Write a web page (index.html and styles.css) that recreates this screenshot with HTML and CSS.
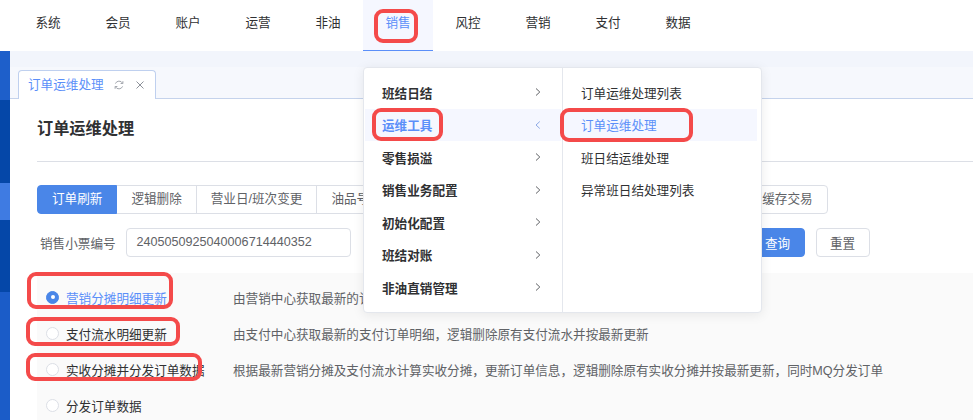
FILE: index.html
```html
<!DOCTYPE html>
<html lang="zh-CN">
<head>
<meta charset="utf-8">
<title>订单运维处理</title>
<link rel="stylesheet" href="styles.css">
</head>
<body>
<header class="topnav">
  <a class="nav-item">系统</a>
  <a class="nav-item">会员</a>
  <a class="nav-item">账户</a>
  <a class="nav-item">运营</a>
  <a class="nav-item">非油</a>
  <a class="nav-item active">销售</a>
  <a class="nav-item">风控</a>
  <a class="nav-item">营销</a>
  <a class="nav-item">支付</a>
  <a class="nav-item">数据</a>
</header>
<div class="layout">
  <aside class="sidebar">
    <div class="sb sb1"></div>
    <div class="sb sb2"></div>
    <div class="sb sb3"></div>
    <div class="sb sb4"></div>
    <div class="sb sb5"></div>
  </aside>
  <main class="content">
    <div class="tabbar">
      <div class="tabstrip">
        <div class="tab">
          <span class="tab-text">订单运维处理</span>
          <svg class="tab-refresh" width="10" height="10" viewBox="0 0 10 10"><path d="M8.6 3.2A4 4 0 0 0 1.4 3.6" fill="none" stroke="#a3a7ae" stroke-width="1"/><path d="M8.9 1.2V3.5H6.6" fill="none" stroke="#a3a7ae" stroke-width="1"/><path d="M1.4 6.8A4 4 0 0 0 8.6 6.4" fill="none" stroke="#a3a7ae" stroke-width="1"/><path d="M1.1 8.8V6.5H3.4" fill="none" stroke="#a3a7ae" stroke-width="1"/></svg>
          <svg class="tab-close" width="8" height="8" viewBox="0 0 8 8"><path d="M0.5 0.5L7.5 7.5M7.5 0.5L0.5 7.5" stroke="#8d9199" stroke-width="1"/></svg>
        </div>
      </div>
    </div>
    <section class="panel">
      <h1 class="title">订单运维处理</h1>
      <div class="divider"></div>
      <div class="btn-group">
        <button class="seg active">订单刷新</button>
        <button class="seg">逻辑删除</button>
        <button class="seg">营业日/班次变更</button>
        <button class="seg">油品号变更</button>
        <button class="seg">会员信息变更</button>
        <button class="seg">发票信息重新推送</button>
        <button class="seg">重推营销数据</button>
        <button class="seg">缓存交易</button>
      </div>
      <div class="form-row">
        <label class="form-label">销售小票编号</label>
        <div class="input">2405050925040006714440352</div>
        <div class="actions">
          <button class="btn primary">查询</button>
          <button class="btn">重置</button>
        </div>
      </div>
      <div class="options">
        <div class="opt-row">
          <div class="opt-label checked"><span class="radio on"></span><span>营销分摊明细更新</span></div>
          <div class="opt-desc">由营销中心获取最新的订单营销分摊明细，逻辑删除原有营销分摊并按最新更新</div>
        </div>
        <div class="opt-row">
          <div class="opt-label"><span class="radio"></span><span>支付流水明细更新</span></div>
          <div class="opt-desc">由支付中心获取最新的支付订单明细，逻辑删除原有支付流水并按最新更新</div>
        </div>
        <div class="opt-row">
          <div class="opt-label"><span class="radio"></span><span>实收分摊并分发订单数据</span></div>
          <div class="opt-desc">根据最新营销分摊及支付流水计算实收分摊，更新订单信息，逻辑删除原有实收分摊并按最新更新，同时MQ分发订单</div>
        </div>
        <div class="opt-row">
          <div class="opt-label"><span class="radio"></span><span>分发订单数据</span></div>
        </div>
      </div>
    </section>
  </main>
</div>

<div class="dropdown">
  <ul class="menu-col main-col">
    <li class="menu-item">班结日结<svg class="chev" width="6" height="10" viewBox="0 0 6 10"><path d="M1 1.5L4.8 5L1 8.5" fill="none" stroke="#606266" stroke-width="1"/></svg></li>
    <li class="menu-item active">运维工具<svg class="chev" width="6" height="10" viewBox="0 0 6 10"><path d="M4.8 1.5L1 5L4.8 8.5" fill="none" stroke="#8eaae6" stroke-width="1"/></svg></li>
    <li class="menu-item">零售损溢<svg class="chev" width="6" height="10" viewBox="0 0 6 10"><path d="M1 1.5L4.8 5L1 8.5" fill="none" stroke="#606266" stroke-width="1"/></svg></li>
    <li class="menu-item">销售业务配置<svg class="chev" width="6" height="10" viewBox="0 0 6 10"><path d="M1 1.5L4.8 5L1 8.5" fill="none" stroke="#606266" stroke-width="1"/></svg></li>
    <li class="menu-item">初始化配置<svg class="chev" width="6" height="10" viewBox="0 0 6 10"><path d="M1 1.5L4.8 5L1 8.5" fill="none" stroke="#606266" stroke-width="1"/></svg></li>
    <li class="menu-item">班结对账<svg class="chev" width="6" height="10" viewBox="0 0 6 10"><path d="M1 1.5L4.8 5L1 8.5" fill="none" stroke="#606266" stroke-width="1"/></svg></li>
    <li class="menu-item">非油直销管理<svg class="chev" width="6" height="10" viewBox="0 0 6 10"><path d="M1 1.5L4.8 5L1 8.5" fill="none" stroke="#606266" stroke-width="1"/></svg></li>
  </ul>
  <ul class="menu-col sub-col">
    <li class="menu-item">订单运维处理列表</li>
    <li class="menu-item active">订单运维处理</li>
    <li class="menu-item">班日结运维处理</li>
    <li class="menu-item">异常班日结处理列表</li>
  </ul>
</div>

<div class="mark mark-nav"></div>
<div class="mark mark-menu1"></div>
<div class="mark mark-menu2"></div>
<div class="mark mark-opt1"></div>
<div class="mark mark-opt2"></div>
<div class="mark mark-opt3"></div>
</body>
</html>
```
FILE: styles.css
```css
* { box-sizing: border-box; margin: 0; padding: 0; }
html, body { width: 973px; height: 420px; overflow: hidden; }
body {
  position: relative;
  font-family: "Liberation Sans", "Noto Sans CJK SC", sans-serif;
  font-size: 12.6px;
  color: #303133;
  background: #f2f5fc;
}
button { font-family: inherit; font-size: 12.6px; cursor: pointer; }
ul { list-style: none; }

/* top navigation */
.topnav {
  display: flex;
  height: 51px;
  background: #fff;
  padding-left: 13px;
}
.nav-item {
  width: 70px;
  height: 51px;
  line-height: 46px;
  text-align: center;
  color: #303133;
  border-bottom: 1px solid transparent;
}
.nav-item.active {
  background: #f5f7ff;
  color: #5b8ff9;
  border-bottom-color: #5b8ff9;
}

/* layout */
.layout { display: flex; height: 369px; }
.sidebar { width: 10px; display: flex; flex-direction: column; }
.sb1 { height: 49px; background: #1e5fca; }
.sb2 { height: 83px; background: #0547a8; }
.sb3 { height: 37px; background: #3f7be2; }
.sb4 { height: 72px; background: #0547a8; }
.sb5 { flex: 1; background: #1b5cc8; }

.content { flex: 1; display: flex; flex-direction: column; min-width: 0; }

/* tabs */
.tabbar { padding-top: 16px; background: #f2f5fc; }
.tabstrip {
  height: 32px;
  background: #f6f8fd;
  border-bottom: 1px solid #c5d3ec;
  padding-left: 8px;
  display: flex;
  align-items: flex-end;
}
.tab {
  height: 29px;
  margin-bottom: -1px;
  display: flex;
  align-items: center;
  background: #fff;
  border: 1px solid #bfd0ef;
  border-bottom: none;
  border-radius: 4px 4px 0 0;
  padding: 0 11px 0 9px;
}
.tab-text { color: #5b8ff9; line-height: 18px; }
.tab-refresh { margin-left: 10px; }
.tab-close { margin-left: 12px; }

/* panel */
.panel {
  flex: 1;
  background: #fff;
  padding: 18px 0 0 27px;
  display: flex;
  flex-direction: column;
}
.title {
  font-size: 16.2px;
  font-weight: 700;
  line-height: 22px;
  height: 22px;
  color: #303133;
}
.divider { margin-top: 22px; height: 1px; background: #dcdfe6; flex: none; }

.btn-group { margin-top: 23px; display: flex; height: 29px; flex: none; }
.seg {
  height: 29px;
  padding: 0 14px;
  border: 1px solid #dcdfe6;
  background: #fff;
  color: #606266;
  line-height: 27px;
  white-space: nowrap;
}
.seg + .seg { margin-left: -1px; }
.seg.active { background: #4a86e8; border-color: #4a86e8; color: #fff; border-radius: 4px 0 0 4px; position: relative; }
.seg:last-child { border-radius: 0 4px 4px 0; }

.form-row { margin-top: 14px; height: 29px; display: flex; align-items: center; flex: none; }
.form-label { margin-left: 3px; margin-right: 10px; color: #606266; }
.input {
  width: 225px;
  height: 29px;
  border: 1px solid #dcdfe6;
  border-radius: 4px;
  padding-left: 10px;
  line-height: 27px;
  color: #606266;
}
.actions { margin-left: 400px; display: flex; gap: 11px; }
.btn {
  width: 54px;
  height: 29px;
  border: 1px solid #dcdfe6;
  border-radius: 4px;
  background: #fff;
  color: #606266;
}
.btn.primary { background: #4a86e8; border-color: #4a86e8; color: #fff; }

/* options */
.options {
  margin-top: 16px;
  flex: 1;
  background: #fafafa;
  padding: 6px 0 0 9px;
}
.opt-row { height: 36px; display: flex; align-items: center; }
.opt-label { width: 187px; display: flex; align-items: center; color: #303133; white-space: nowrap; }
.opt-label.checked { color: #5b8ff9; }
.radio {
  width: 13px;
  height: 13px;
  border-radius: 50%;
  border: 1px solid #dcdfe6;
  background: #fff;
  margin-right: 7px;
  flex: none;
  position: relative;
}
.radio.on { background: #4a86e8; border-color: #4a86e8; }
.radio.on::after {
  content: "";
  position: absolute;
  left: 3.5px; top: 3.5px;
  width: 4px; height: 4px;
  border-radius: 50%;
  background: #fff;
}
.opt-desc { color: #606266; white-space: nowrap; }

/* dropdown menu (overlay) */
.dropdown {
  position: absolute;
  left: 363px;
  top: 67px;
  width: 399px;
  height: 246px;
  display: flex;
  background: #fff;
  border: 1px solid #e4e7ed;
  border-radius: 4px;
  box-shadow: 0 2px 12px rgba(0, 0, 0, 0.08);
  z-index: 10;
}
.menu-col { padding-top: 8px; }
.main-col { width: 199px; border-right: 1px solid #e4e7ed; padding-left: 1px; padding-right: 1px; }
.sub-col { flex: 1; padding-left: 1px; padding-right: 4px; }
.menu-item {
  height: 32.5px;
  display: flex;
  align-items: center;
  justify-content: space-between;
  padding: 0 20px 0 17px;
  color: #303133;
  white-space: nowrap;
}
.main-col .menu-item { font-weight: 700; }
.menu-item.active { background: #f5f7ff; color: #5b8ff9; }

/* red annotation marks */
.mark {
  position: absolute;
  border: 4px solid #f44a4a;
  border-radius: 9px;
  z-index: 20;
}
.mark-nav { left: 374px; top: 9px; width: 44px; height: 34px; }
.mark-menu1 { left: 372px; top: 108px; width: 71px; height: 33px; }
.mark-menu2 { left: 560px; top: 108px; width: 133px; height: 34px; }
.mark-opt1 { left: 27px; top: 272px; width: 146px; height: 37px; }
.mark-opt2 { left: 26px; top: 317px; width: 154px; height: 29px; }
.mark-opt3 { left: 26px; top: 353px; width: 176px; height: 28px; }
```
